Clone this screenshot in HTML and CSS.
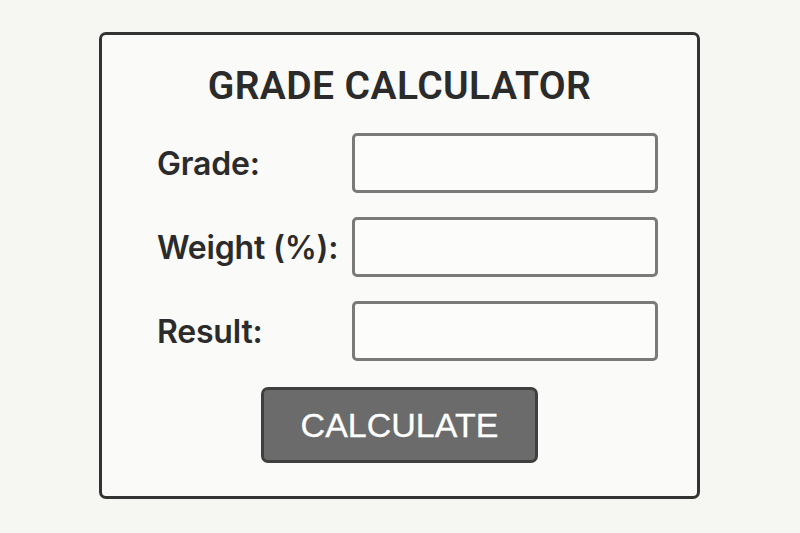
FILE: index.html
```html
<!DOCTYPE html>
<html lang="en">
<head>
<meta charset="utf-8">
<title>Grade Calculator</title>
<link rel="stylesheet" href="styles.css">
</head>
<body>
  <main class="card">
    <h1 class="title">GRADE CALCULATOR</h1>
    <form class="form">
      <label class="label" for="grade">Grade:</label>
      <input class="field" id="grade" type="text">
      <label class="label" for="weight">Weight (%):</label>
      <input class="field" id="weight" type="text">
      <label class="label" for="result">Result:</label>
      <input class="field" id="result" type="text" readonly>
    </form>
    <button class="btn" type="button">CALCULATE</button>
  </main>
</body>
</html>
```

FILE: styles.css
```css
html, body {
  margin: 0;
  padding: 0;
}

body {
  background: #f6f6f3;
  width: 800px;
  height: 533px;
  overflow: hidden;
  color: #2b2b2b;
}

.card {
  box-sizing: border-box;
  width: 601px;
  height: 467px;
  margin: 32px 0 0 99px;
  border: 3px solid #333;
  border-radius: 7px;
  background: #fafaf8;
  padding-top: 29px;
  display: flex;
  flex-direction: column;
  align-items: center;
}

.title {
  margin: 0;
  font-family: Roboto, "Liberation Sans", sans-serif;
  font-weight: 600;
  font-size: 39px;
  line-height: 44px;
  letter-spacing: 0.4px;
  color: #2b2b2b;
}

.form {
  align-self: stretch;
  margin: 25px 39px 0 55px;
  display: grid;
  grid-template-columns: 195px 1fr;
  row-gap: 24px;
  align-items: center;
}

.label {
  font-family: Inter, "Liberation Sans", sans-serif;
  font-weight: 600;
  font-size: 32px;
  color: #2b2b2b;
  letter-spacing: -0.2px;
}

.field {
  box-sizing: border-box;
  height: 60px;
  width: 306px;
  border: 3px solid #7a7a7a;
  border-radius: 5px;
  background: #fcfcfb;
  margin: 0;
  padding: 0 10px;
  font-size: 24px;
  outline: none;
}

.btn {
  box-sizing: border-box;
  margin-top: 26px;
  width: 277px;
  height: 76px;
  border: 3px solid #3f3f3f;
  border-radius: 7px;
  background: #6b6b6b;
  color: #fff;
  font-family: "Liberation Sans", Arial, sans-serif;
  font-size: 34px;
  font-weight: 400;
  -webkit-text-stroke: 0.3px #fff;
  padding: 0;
  cursor: pointer;
}
```
